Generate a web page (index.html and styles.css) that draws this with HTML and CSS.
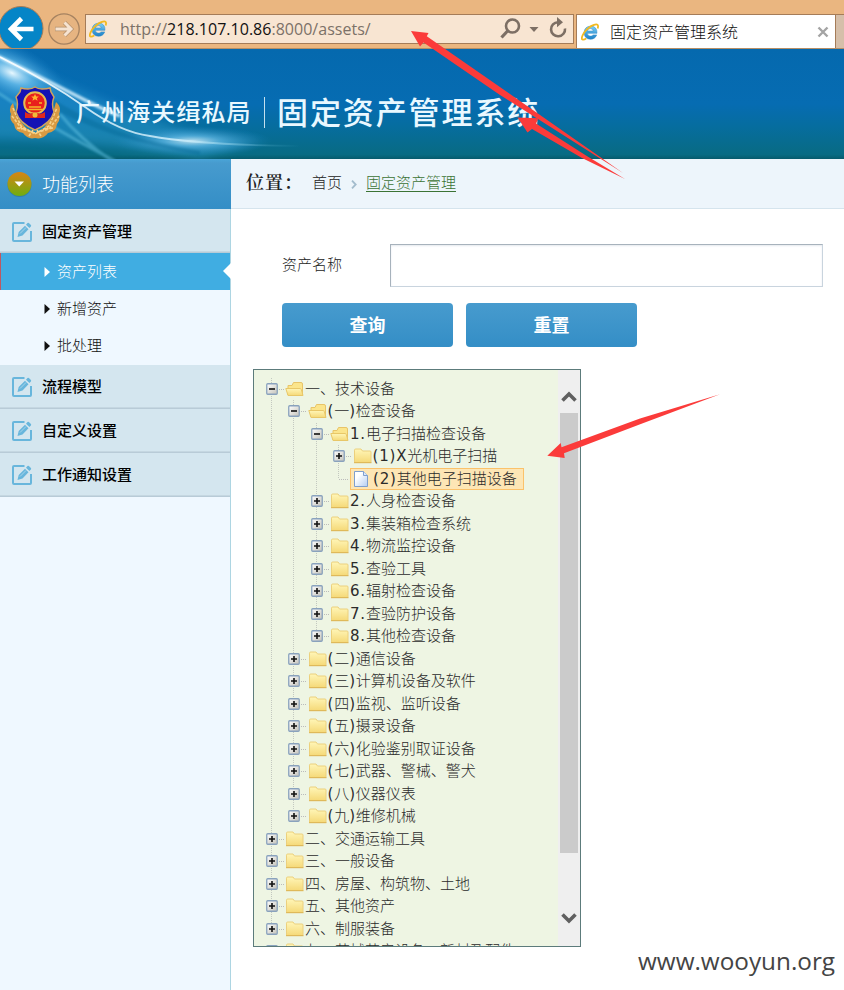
FILE: index.html
```html
<!DOCTYPE html>
<html lang="zh-CN">
<head>
<meta charset="utf-8">
<title>固定资产管理系统</title>
<link rel="stylesheet" href="styles.css">
</head>
<body>
<svg class="defs" width="0" height="0">
  <defs>
    <linearGradient id="gFold" x1="0" y1="0" x2="0" y2="1"><stop offset="0" stop-color="#fff6b8"/><stop offset="1" stop-color="#f5d978"/></linearGradient>
    <linearGradient id="gBox" x1="0" y1="0" x2="1" y2="1"><stop offset="0" stop-color="#fff"/><stop offset="1" stop-color="#c4c2b8"/></linearGradient>
    <linearGradient id="gFile" x1="0" y1="0" x2="1" y2="1"><stop offset=".3" stop-color="#fff"/><stop offset="1" stop-color="#b4cdf2"/></linearGradient>
    <linearGradient id="gE" x1="0" y1="0" x2="0" y2="1"><stop offset="0" stop-color="#7cd0f5"/><stop offset="1" stop-color="#1b7fc6"/></linearGradient>
    <symbol id="plus" viewBox="0 0 12 12"><rect x=".75" y=".75" width="10.5" height="10.5" rx="1" fill="url(#gBox)" stroke="#89a2bd" stroke-width="1.3"/><path d="M3 6h6M6 3v6" stroke="#111" stroke-width="1.6"/></symbol>
    <symbol id="minus" viewBox="0 0 12 12"><rect x=".75" y=".75" width="10.5" height="10.5" rx="1" fill="url(#gBox)" stroke="#89a2bd" stroke-width="1.3"/><path d="M3 6h6" stroke="#111" stroke-width="1.6"/></symbol>
    <symbol id="folder" viewBox="0 0 19 16"><path d="M1.500 14.500V2.200Q1.500 1 2.700 1H8l1.500 2H17q1 0 1 1v10.500z" fill="url(#gFold)" stroke="#ecd07c"/><path d="M1 14.700h17.500" stroke="#dcb453"/></symbol>
    <symbol id="open" viewBox="0 0 19 16"><path d="M3 14V4.500h4L8.500 1.500H16q1.500 0 1.500 1.500v11z" fill="#fbe58c" stroke="#e8c468"/><path d="M.8 7.500H15q1 0 1.300 1l1.700 6H3z" fill="url(#gFold)" stroke="#e8c768"/></symbol>
    <symbol id="file" viewBox="0 0 16 18"><path d="M1.500 1.500h9l4 4v11h-13z" fill="url(#gFile)" stroke="#7f9fce"/><path d="M10.500 1.500v4h4" fill="#dbe8fb" stroke="#7f9fce"/></symbol>
    <symbol id="edit" viewBox="0 0 20 20"><path d="M12.500 1H2Q1 1 1 2v16q0 1 1 1h16q1 0 1-1V9" fill="none" stroke="#68b6dc" stroke-width="2"/><path d="M5.500 15l1.200-5L13 3.700l3.500 3.500L10.500 13.500zM14 2.700L15.500 1q.7-.6 1.400 0l2 2q.6.700 0 1.400l-1.500 1.700z" fill="#68b6dc"/><path d="M8 11.500L14 5.500" stroke="#b8dced" stroke-width=".8"/></symbol>
    <symbol id="ie" viewBox="0 0 18 18"><path d="M16 10.300H6.300q.3 2.800 3.200 2.800 1.600 0 2.500-1.200h3.700q-1.700 4.400-6.300 4.400-6.300-.4-6.300-6.900Q3.600 3.300 9.900 3.100q6.300.3 6.100 7.200zM6.400 8h5.900q-.4-2.400-2.900-2.400T6.400 8z" fill="url(#gE)" stroke="#2b88c8" stroke-width=".5"/><path d="M16.700 5.500Q18.300 0 13 1.800 7 4 3.200 9.500-.8 16 1.800 16.700q1.500.2 3.500-1.300" fill="none" stroke="#f2b91f" stroke-width="1.800"/></symbol>
    <symbol id="tri" viewBox="0 0 6 10"><path d="M.5 0L6 5 .5 10z" fill="currentColor"/></symbol>
  </defs>
</svg>

<div class="chrome">
  <div class="back"><svg width="45" height="45" viewBox="0 0 45 45"><circle cx="22" cy="22.500" r="22" fill="#0585c7" stroke="#a77b55"/><path d="M34.500 23H12M22.500 12.500L12 23 22.500 33.500" fill="none" stroke="#fff" stroke-width="4.600"/></svg></div>
  <svg class="fwd" width="32" height="32" viewBox="0 0 32 32"><circle cx="16" cy="16" r="15.200" fill="#e6b481" stroke="#a58260" stroke-width="1.300"/><path d="M7 16h15M16.500 9.500L23 16l-6.500 6.500" fill="none" stroke="#b5906d" stroke-width="4.400"/><path d="M7.500 16h15M16.500 9.500L23 16l-6.500 6.500" fill="none" stroke="#f6e3d1" stroke-width="3"/></svg>
  <div class="address">
    <svg class="ie" width="18" height="18"><use href="#ie"/></svg>
    <span class="url">http://<b>218.107.10.86</b>:8000/assets/</span>
    <svg class="tools" width="70" height="24" viewBox="0 0 70 24"><circle cx="14.500" cy="9" r="6.500" fill="none" stroke="#7d6f64" stroke-width="2.600"/><path d="M10 13.500L3.500 20.500" stroke="#7d6f64" stroke-width="3.200"/><path d="M31.500 10h9l-4.500 5z" fill="#7d6f64"/><path d="M60 5.300A7 7 0 1 0 67 11.500" fill="none" stroke="#7d6f64" stroke-width="2.600"/><path d="M59 0l6 5.200-6 5z" fill="#7d6f64"/></svg>
  </div>
  <div class="tab">
    <svg class="ie" width="18" height="18"><use href="#ie"/></svg>
    <span>固定资产管理系统</span>
    <svg width="12" height="12" viewBox="0 0 12 12"><path d="M1.500 1.500l9 9M10.500 1.500l-9 9" stroke="#a4a4a4" stroke-width="2.400"/></svg>
  </div>
  <div class="newtab"></div>
</div>

<header class="banner">
  <svg class="glow" width="844" height="110" viewBox="0 0 844 110">
    <defs>
      <radialGradient id="rg1"><stop offset="0" stop-color="#e8f8ff"/><stop offset=".35" stop-color="#6cc0ee" stop-opacity=".75"/><stop offset="1" stop-color="#2288cc" stop-opacity="0"/></radialGradient>
      <linearGradient id="ln1"><stop offset="0" stop-color="#fff" stop-opacity=".9"/><stop offset=".6" stop-color="#d8f4ff" stop-opacity=".75"/><stop offset="1" stop-color="#5cc0dd" stop-opacity="0"/></linearGradient>
      <filter id="b1" x="-20%" y="-50%" width="140%" height="200%"><feGaussianBlur stdDeviation="1.200"/></filter>
      <filter id="b4" x="-20%" y="-50%" width="140%" height="200%"><feGaussianBlur stdDeviation="5"/></filter>
    </defs>
    <path d="M-10 0Q50 30 130 62T260 92L200 110Q90 90-10 90z" fill="#35a4d8" opacity=".4" filter="url(#b4)"/>
    <ellipse cx="12" cy="24" rx="60" ry="28" fill="url(#rg1)" transform="rotate(25 12 24)"/>
    <ellipse cx="192" cy="92" rx="80" ry="15" fill="url(#rg1)" opacity=".8"/>
    <path d="M-5 6Q40 28 75 46T120 67" fill="none" stroke="#d8f2ff" stroke-width="3.500" opacity=".85" filter="url(#b1)"/>
    <path d="M0 8Q50 33 85 58T150 87Q200 96 300 97" fill="none" stroke="url(#ln1)" stroke-width="1.800"/>
    <path d="M-3 43Q45 75 115 112M60 65Q80 90 112 112" fill="none" stroke="#65c5e5" stroke-width="3" opacity=".5" filter="url(#b1)"/>
    <path d="M35 40Q90 80 160 96M50 55Q105 88 200 104" fill="none" stroke="#056392" stroke-width="4" opacity=".35" filter="url(#b1)"/>
  </svg>
  <svg class="emblem" width="52" height="54" viewBox="0 0 52 54">
    <path d="M4 17q-5 5-2 11-2 6 3 10 1 8 9 9 5 7 12 5 8 2 13-5 8-1 9-9 4-5 2-10 3-7-3-12l-4 14-8 12-9 5-9-5-9-11z" fill="#d99a42"/>
    <path d="M4 22l8 18 14 8 14-8 8-18M3 30l10 13 13 4 14-4 10-13M8 42l9 1M44 42l-9 1M20 50l4-6M32 50l-4-6" fill="none" stroke="#f7d38c" stroke-width="1.600" stroke-dasharray="3 1.500"/>
    <path d="M26 1q3 2 7 2 5 0 8-1l1 4 3 5q-3 7 0 15-3 11-19 18Q10 37 7 26q3-8 0-15l4-5 1-4q3 1 7 1 4 0 7-2z" fill="#1412b4" stroke="#cfa25d" stroke-width="1.500"/>
    <circle cx="26" cy="17" r="10.800" fill="#e9201c" stroke="#e5bb51" stroke-width="2"/>
    <path d="M26 8l1.200 2.400h2.600l-2 1.800.8 2.600-2.600-1.500-2.600 1.500.8-2.600-2-1.800h2.600z" fill="#ffb42d"/>
    <path d="M19 17h3M30 17h3M20 21h12M18 23.500h16" stroke="#f4b82a" stroke-width="1.300"/>
    <path d="M16 26q4 3 7 1 3 2 6 0 3 2 7-1v6H16z" fill="#df281d"/><circle cx="26" cy="29" r="2.500" fill="#f1bc39"/>
  </svg>
  <span class="org">广州海关缉私局</span>
  <i class="sep"></i>
  <h1>固定资产管理系统</h1>
</header>

<div class="page">
  <nav class="side">
    <div class="side-title">
      <svg width="26" height="26" viewBox="0 0 26 26"><defs><linearGradient id="gb" x1="0" y1="0" x2="0" y2="1"><stop offset="0" stop-color="#d78415"/><stop offset="1" stop-color="#6fae10"/></linearGradient></defs><circle cx="13.500" cy="14" r="12" fill="#316f93" opacity=".6"/><circle cx="13.500" cy="13" r="12" fill="url(#gb)"/><path d="M8.500 10.500h9.500l-4.750 5z" fill="#fff"/></svg>
      <span>功能列表</span>
    </div>
    <div class="group"><svg width="20" height="20"><use href="#edit"/></svg><span>固定资产管理</span></div>
    <div class="item active"><svg width="6" height="10"><use href="#tri"/></svg><span>资产列表</span></div>
    <div class="item"><svg width="6" height="10"><use href="#tri"/></svg><span>新增资产</span></div>
    <div class="item"><svg width="6" height="10"><use href="#tri"/></svg><span>批处理</span></div>
    <div class="group"><svg width="20" height="20"><use href="#edit"/></svg><span>流程模型</span></div>
    <div class="group"><svg width="20" height="20"><use href="#edit"/></svg><span>自定义设置</span></div>
    <div class="group"><svg width="20" height="20"><use href="#edit"/></svg><span>工作通知设置</span></div>
  </nav>
  <main>
    <div class="crumbs"><strong>位置：</strong><span>首页</span><svg width="6" height="9" viewBox="0 0 6 9"><path d="M1 .7l3.700 3.800L1 8.300" fill="none" stroke="#a3bccd" stroke-width="1.800"/></svg><a>固定资产管理</a></div>
    <div class="form">
      <label>资产名称</label>
      <input type="text">
    </div>
    <div class="actions"><button>查询</button><button>重置</button></div>
    <div class="tree">
      <ul class="root">
        <li><div class="row"><svg class="t"><use href="#minus"/></svg><svg class="f"><use href="#open"/></svg><span>一、技术设备</span></div>
          <ul>
            <li><div class="row"><svg class="t"><use href="#minus"/></svg><svg class="f"><use href="#open"/></svg><span><i>(</i>一<i>)</i>检查设备</span></div>
              <ul>
                <li><div class="row"><svg class="t"><use href="#minus"/></svg><svg class="f"><use href="#open"/></svg><span><i>1.</i>电子扫描检查设备</span></div>
                  <ul>
                    <li><div class="row"><svg class="t"><use href="#plus"/></svg><svg class="f"><use href="#folder"/></svg><span><i>(1)X</i>光机电子扫描</span></div></li>
                    <li><div class="row leaf"><div class="sel"><svg class="d"><use href="#file"/></svg><span><i>(2)</i>其他电子扫描设备</span></div></div></li>
                  </ul>
                </li>
                <li><div class="row"><svg class="t"><use href="#plus"/></svg><svg class="f"><use href="#folder"/></svg><span><i>2.</i>人身检查设备</span></div></li>
                <li><div class="row"><svg class="t"><use href="#plus"/></svg><svg class="f"><use href="#folder"/></svg><span><i>3.</i>集装箱检查系统</span></div></li>
                <li><div class="row"><svg class="t"><use href="#plus"/></svg><svg class="f"><use href="#folder"/></svg><span><i>4.</i>物流监控设备</span></div></li>
                <li><div class="row"><svg class="t"><use href="#plus"/></svg><svg class="f"><use href="#folder"/></svg><span><i>5.</i>查验工具</span></div></li>
                <li><div class="row"><svg class="t"><use href="#plus"/></svg><svg class="f"><use href="#folder"/></svg><span><i>6.</i>辐射检查设备</span></div></li>
                <li><div class="row"><svg class="t"><use href="#plus"/></svg><svg class="f"><use href="#folder"/></svg><span><i>7.</i>查验防护设备</span></div></li>
                <li><div class="row"><svg class="t"><use href="#plus"/></svg><svg class="f"><use href="#folder"/></svg><span><i>8.</i>其他检查设备</span></div></li>
              </ul>
            </li>
            <li><div class="row"><svg class="t"><use href="#plus"/></svg><svg class="f"><use href="#folder"/></svg><span><i>(</i>二<i>)</i>通信设备</span></div></li>
            <li><div class="row"><svg class="t"><use href="#plus"/></svg><svg class="f"><use href="#folder"/></svg><span><i>(</i>三<i>)</i>计算机设备及软件</span></div></li>
            <li><div class="row"><svg class="t"><use href="#plus"/></svg><svg class="f"><use href="#folder"/></svg><span><i>(</i>四<i>)</i>监视、监听设备</span></div></li>
            <li><div class="row"><svg class="t"><use href="#plus"/></svg><svg class="f"><use href="#folder"/></svg><span><i>(</i>五<i>)</i>摄录设备</span></div></li>
            <li><div class="row"><svg class="t"><use href="#plus"/></svg><svg class="f"><use href="#folder"/></svg><span><i>(</i>六<i>)</i>化验鉴别取证设备</span></div></li>
            <li><div class="row"><svg class="t"><use href="#plus"/></svg><svg class="f"><use href="#folder"/></svg><span><i>(</i>七<i>)</i>武器、警械、警犬</span></div></li>
            <li><div class="row"><svg class="t"><use href="#plus"/></svg><svg class="f"><use href="#folder"/></svg><span><i>(</i>八<i>)</i>仪器仪表</span></div></li>
            <li><div class="row"><svg class="t"><use href="#plus"/></svg><svg class="f"><use href="#folder"/></svg><span><i>(</i>九<i>)</i>维修机械</span></div></li>
          </ul>
        </li>
        <li><div class="row"><svg class="t"><use href="#plus"/></svg><svg class="f"><use href="#folder"/></svg><span>二、交通运输工具</span></div></li>
        <li><div class="row"><svg class="t"><use href="#plus"/></svg><svg class="f"><use href="#folder"/></svg><span>三、一般设备</span></div></li>
        <li><div class="row"><svg class="t"><use href="#plus"/></svg><svg class="f"><use href="#folder"/></svg><span>四、房屋、构筑物、土地</span></div></li>
        <li><div class="row"><svg class="t"><use href="#plus"/></svg><svg class="f"><use href="#folder"/></svg><span>五、其他资产</span></div></li>
        <li><div class="row"><svg class="t"><use href="#plus"/></svg><svg class="f"><use href="#folder"/></svg><span>六、制服装备</span></div></li>
        <li><div class="row"><svg class="t"><use href="#plus"/></svg><svg class="f"><use href="#folder"/></svg><span>七、药械药房设备、新村及配件</span></div></li>
      </ul>
      <div class="scroll">
        <svg width="16" height="13" viewBox="0 0 16 13"><path d="M1.500 10.500L8 4l6.500 6.500" fill="none" stroke="#606060" stroke-width="3.600"/></svg>
        <div class="thumb"></div>
        <svg width="16" height="13" viewBox="0 0 16 13"><path d="M1.500 2.500L8 9l6.500-6.500" fill="none" stroke="#606060" stroke-width="3.600"/></svg>
      </div>
    </div>
  </main>
</div>

<svg class="marks" width="844" height="990" viewBox="0 0 844 990">
  <g fill="#fb3b3a">
    <path d="M411 31l17.500 2-1.700 3.300L510 94l113 79L500 95 423.500 42.500 420 46.500z"/>
    <path d="M517.500 117.500l21 .7-2.500 5.300 50 32 39 23.500-43-21-50-29-4.500 3.500z"/>
    <path d="M547.300 455.700l13.400-12.700.8 4.300L640 418.500l80-24.300-78.500 29.500-77.500 29.500.7 4.700z"/>
  </g>
</svg>
<div class="watermark">www.wooyun.org</div>
</body>
</html>
```
FILE: styles.css
```css
* { box-sizing: border-box; }
body {
  margin: 0;
  width: 844px;
  height: 990px;
  overflow: hidden;
  position: relative;
  background: #fff;
  color: #222;
  font: 300 15px/1 "Noto Sans CJK SC", sans-serif;
}
svg { display: block; flex: none; }
.defs { position: absolute; }

.chrome {
  height: 49px;
  background: #eab680;
  border-bottom: 1px solid #b58e65;
  display: flex;
  align-items: flex-start;
  overflow: hidden;
}
.back { padding-top: 6px; width: 48px; }
.back svg { margin-left: -1px; }
.fwd { margin-top: 13px; }
.address {
  margin: 14px 0 0 5px;
  width: 489px;
  height: 30px;
  border: 1px solid #a57c58;
  background: #f8e5d2;
  display: flex;
  align-items: center;
}
.address .ie { margin-left: 3px; }
.tools { margin-right: 5px; }
.url {
  flex: 1;
  margin-left: 13px;
  padding-bottom: 1px;
  white-space: nowrap;
  font: 400 16px/20px "Open Sans", "Noto Sans", sans-serif;
  letter-spacing: .02px;
  color: #7c7168;
}
.url b { font-weight: 400; color: #111; }
.tab {
  margin: 14px 0 0 2px;
  width: 260px;
  height: 35px;
  background: #fff;
  border: 1px solid #a57c58;
  border-bottom: 0;
  display: flex;
  align-items: center;
  padding: 0 6px 0 4px;
  font-size: 16px;
  color: #111;
}
.tab span { flex: 1; margin-left: 11px; padding-bottom: 2px; }
.newtab { margin-top: 14px; flex: 1; height: 35px; background: #d6bfa9; border-top: 1px solid #a57c58; }

.banner {
  height: 110px;
  position: relative;
  display: flex;
  align-items: center;
  background: linear-gradient(#0569ae 0, #066cb2 50%, #066d9f 70%, #086b83 96%, #065b6c 100%);
  color: #fff;
}
.glow { position: absolute; left: 0; top: 0; }
.emblem { position: relative; margin: 17px 0 0 9px; }
.org { position: relative; margin: 14px 0 0 15px; width: 175px; font-size: 24px; letter-spacing: 1.100px; white-space: nowrap; font-weight: 500; color: #e9f8ff; }
.sep { position: relative; margin: 17px 0 0 13px; width: 1px; height: 31px; background: #c4e0ef; }
.banner h1 { position: relative; margin: 13px 0 0 12px; font-size: 31px; line-height: 1; letter-spacing: 1.900px; font-weight: 500; white-space: nowrap; color: #e9f8ff; }

.page { display: flex; height: 831px; }
.side { width: 231px; background: #eff8ff; border-right: 1px solid #add5e2; }
.side-title {
  width: 231px;
  height: 50px;
  padding-left: 6px;
  display: flex;
  align-items: center;
  background: linear-gradient(#4aa5d8 0, #479bce 8%, #348ec6 100%);
  color: #fff;
  font-size: 18px;
}
.side-title span { margin-left: 10px; padding-bottom: 2px; }
.group {
  height: 44px;
  padding: 2px 0 0 12px;
  display: flex;
  align-items: center;
  gap: 10px;
  background: #d4e6ef;
  border-bottom: 1px solid #b8cbd7;
  box-shadow: inset 0 -1px #c5d7e1;
  color: #000;
  font-weight: 500;
}
.group span { padding-bottom: 3px; }
.item {
  height: 37.300px;
  padding: 0 0 0 44px;
  display: flex;
  align-items: center;
  gap: 7px;
  color: #111;
}
.item span { padding-bottom: 3px; }
.item.active {
  position: relative;
  background: #40ade2;
  border-left: 1px solid #bd5862;
  padding-left: 43px;
  color: #fff;
}
.item.active::after {
  content: "";
  position: absolute;
  right: -1px;
  top: 10px;
  border: 8px solid transparent;
  border-left: 0;
  border-right-color: #fff;
}

main { flex: 1; min-width: 0; }
.crumbs {
  height: 50px;
  padding: 0 0 5px 15px;
  display: flex;
  align-items: center;
  background: #edf5fb;
  border-bottom: 1px solid #d5e4ed;
}
.crumbs strong { width: 66px; font: 600 18px/1 "Noto Serif CJK SC", "Noto Sans CJK SC", serif; letter-spacing: 1px; white-space: nowrap; color: #222; }
.crumbs svg { margin: 6px 9px 0; }
.crumbs a { color: #3b7334; border-bottom: 1px solid #3b7334; padding-bottom: 2px; margin-top: 3px; }
.form { display: flex; align-items: center; padding-left: 51px; margin-top: 35px; height: 43px; }
.form label { width: 108px; padding-bottom: 5px; }
.form input {
  width: 433px;
  height: 43px;
  border: 1px solid;
  border-color: #a7b2bc #c9d4de #c9d4de #a7b2bc;
  box-shadow: inset 0 1px 2px #e5e9ee;
  background: #fff;
}
.actions { display: flex; gap: 13px; padding: 16px 0 0 51px; }
.actions button {
  width: 171px;
  height: 44px;
  padding: 0 0 2px;
  border: 0;
  border-radius: 4px;
  background: linear-gradient(#479bce, #348ec6);
  color: #fff;
  font: 700 18px/1 "Noto Sans CJK SC", sans-serif;
}

.tree {
  margin: 22px 0 0 22px;
  width: 328px;
  height: 578px;
  border: 1px solid #5c7b7b;
  background: #eef5e3;
  display: flex;
  overflow: hidden;
}
.tree ul {
  list-style: none;
  margin: 0;
  padding: 0;
  background: repeating-linear-gradient(#c3c8c0 0 1px, transparent 1px 2px) 5px 0 / 1px calc(100% - 11px) no-repeat;
}
.tree li ul { margin-left: 22.500px; }
.tree .root { flex: 1; margin: 7.500px 0 0 11.500px; }
.row {
  display: flex;
  align-items: center;
  height: 22.500px;
  white-space: nowrap;
  color: #2b2b2b;
  background: repeating-linear-gradient(90deg, #bbb 0 1px, transparent 1px 2px) 13px 11px / 5px 1px no-repeat;
}
.row span { display: block; height: 22px; line-height: 19px; }
.row i { font: 400 15px/19px "DejaVu Sans", sans-serif; letter-spacing: .8px; }
.t { width: 12px; height: 12px; }
.f { width: 19px; height: 16px; margin: 0 1px 0 7.500px; }
.leaf { padding-left: 17px; background-position: 6px 11px; background-size: 10px 1px; }
.sel {
  display: flex;
  align-items: center;
  height: 22px;
  padding: 0 6px 0 2px;
  border: 1px solid #fbc26b;
  background: #fde6b5;
}
.d { width: 16px; height: 18px; margin-right: 4px; }
.scroll { width: 22px; padding: 20px 0 21px; background: #efefef; display: flex; flex-direction: column; align-items: center; }
.thumb { width: 18px; height: 440px; margin: 10px 0 auto; background: #cbcbcb; }

.marks { position: absolute; left: 0; top: 0; pointer-events: none; }
.watermark { position: absolute; left: 638px; top: 944px; font: 400 24.300px/34px "Open Sans", sans-serif; color: #444; white-space: nowrap; }
```
